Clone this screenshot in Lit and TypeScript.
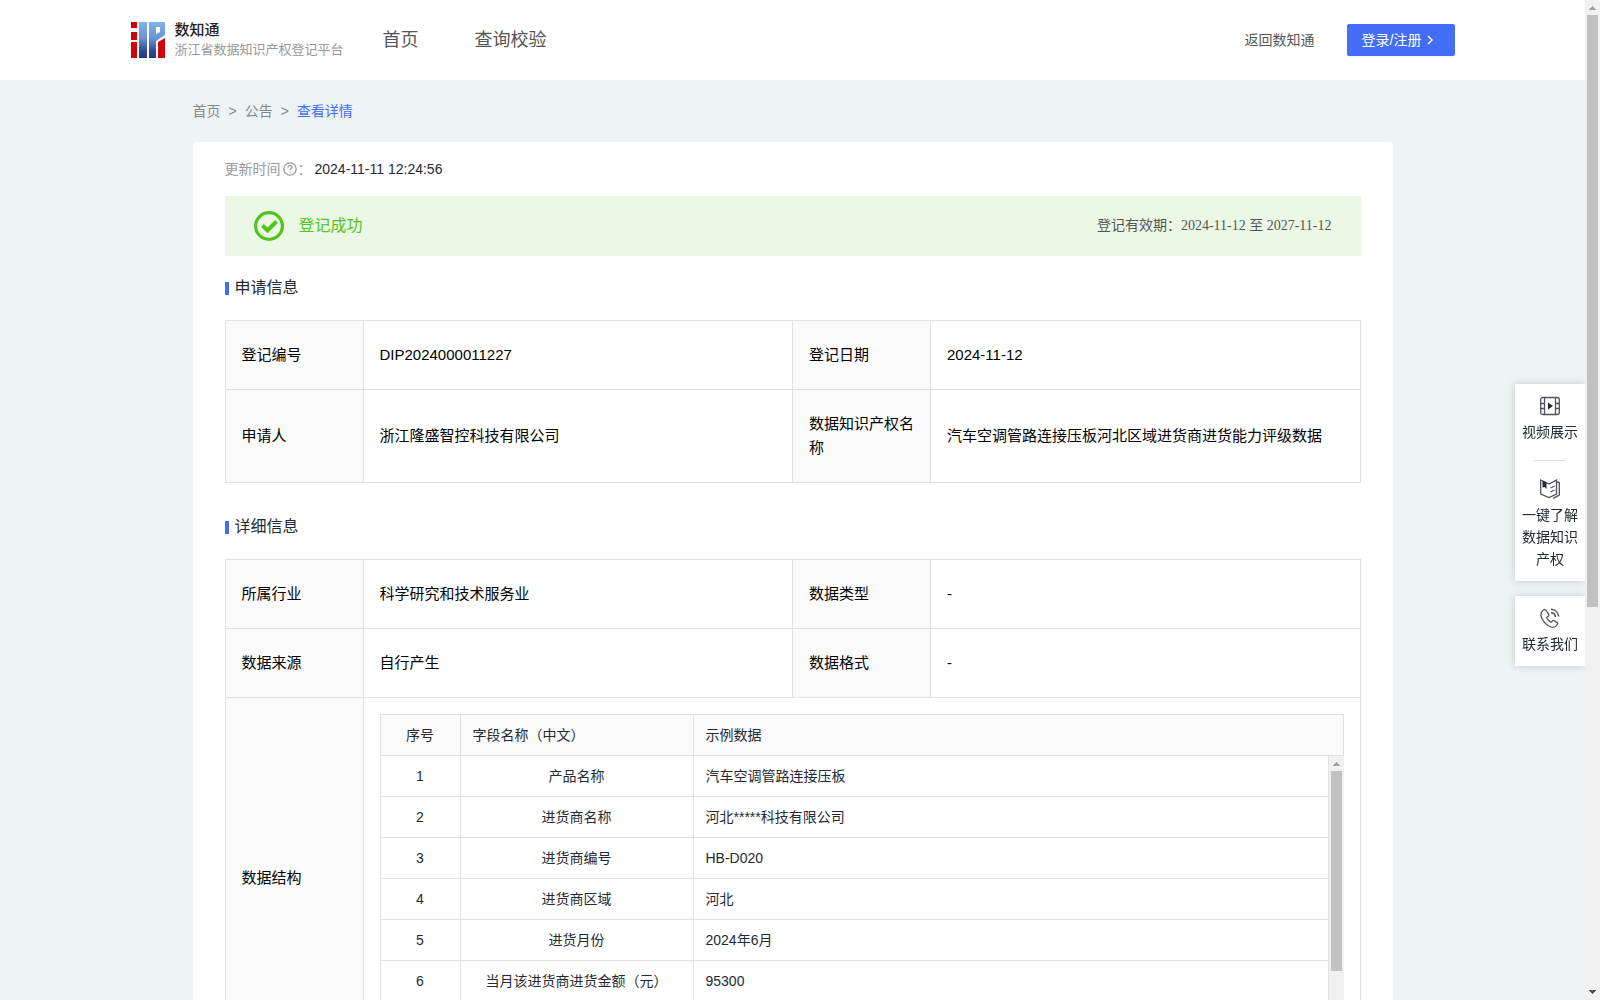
import { LitElement, html, css, svg } from "lit";
import { customElement, property } from "lit/decorators.js";

interface Pair {
  label: string;
  value: string;
}

const applyRows: Pair[][] = [
  [
    { label: "登记编号", value: "DIP2024000011227" },
    { label: "登记日期", value: "2024-11-12" },
  ],
  [
    { label: "申请人", value: "浙江隆盛智控科技有限公司" },
    { label: "数据知识产权名称", value: "汽车空调管路连接压板河北区域进货商进货能力评级数据" },
  ],
];

const detailRows: Pair[][] = [
  [
    { label: "所属行业", value: "科学研究和技术服务业" },
    { label: "数据类型", value: "-" },
  ],
  [
    { label: "数据来源", value: "自行产生" },
    { label: "数据格式", value: "-" },
  ],
];

const fields: [string, string][] = [
  ["产品名称", "汽车空调管路连接压板"],
  ["进货商名称", "河北*****科技有限公司"],
  ["进货商编号", "HB-D020"],
  ["进货商区域", "河北"],
  ["进货月份", "2024年6月"],
  ["当月该进货商进货金额（元）", "95300"],
];

const base = css`
  * {
    box-sizing: border-box;
  }
  a {
    color: inherit;
    text-decoration: none;
  }
  th {
    font-weight: 400;
    text-align: left;
  }
  .scroll {
    flex: 1;
    min-width: 0;
    overflow-x: hidden;
    overflow-y: auto;
    scrollbar-width: none;
  }
`;

/** Vertical scroll rail: two arrows and a thumb that covers a share of the track. */
@customElement("scroll-rail")
export class ScrollRail extends LitElement {
  @property({ type: Number }) share = 50;

  static styles = css`
    :host {
      display: flex;
      flex-direction: column;
      flex: none;
      width: 15px;
      background: #f1f1f1;
    }
    svg {
      display: block;
      flex: none;
    }
    .track {
      flex: 1;
      padding: 0 2px;
    }
    .thumb {
      background: #c1c1c1;
    }
  `;

  render() {
    return html`
      <svg width="15" height="15" viewBox="0 0 15 15" shape-rendering="crispEdges" aria-hidden="true"><path d="M4 10h7L8 6H7z" fill="#a3a3a3"/></svg>
      <div class="track"><div class="thumb" style="height:${this.share}%"></div></div>
      <svg width="15" height="15" viewBox="0 0 15 15" shape-rendering="crispEdges" aria-hidden="true"><path d="M4 5h7L8 9H7z" fill="#505050"/></svg>
    `;
  }
}

const logo = svg`
  <defs>
    <linearGradient id="logo-blue" x1="0" y1="0" x2="0" y2="36" gradientUnits="userSpaceOnUse">
      <stop offset="0" stop-color="#7fb4ea"/>
      <stop offset="0.45" stop-color="#6a93d2"/>
      <stop offset="0.8" stop-color="#2f4a98"/>
      <stop offset="1" stop-color="#26367f"/>
    </linearGradient>
  </defs>
  <path fill="#d2040b" d="M0 0h6v6H0zM0 10h6v8H0zM0 20h6v16H0zM27 20l7-4v20h-7z"/>
  <path fill="url(#logo-blue)" d="M8 0h8v36H8zM18 0h16v13l-9 6v17h-7z"/>
  <path fill="#fff" d="M25 5h4v5l-4 2z"/>`;

@customElement("site-header")
export class SiteHeader extends LitElement {
  static styles = [
    base,
    css`
      :host {
        display: block;
        background: #fff;
      }
      .bar {
        max-width: 1324px;
        height: 80px;
        margin: 0 auto;
        display: flex;
        align-items: center;
      }
      .brand {
        display: flex;
        align-items: center;
        gap: 10px;
        width: 252px;
      }
      .mark {
        width: 34px;
        height: 36px;
        flex: none;
      }
      .words {
        display: flex;
        flex-direction: column;
      }
      .name {
        font-size: 15px;
        line-height: 20px;
        font-weight: 500;
        color: #222;
      }
      .sub {
        font-size: 13px;
        line-height: 20px;
        color: #999;
        white-space: nowrap;
      }
      .nav {
        display: flex;
        gap: 56px;
        flex: 1;
        font-size: 18px;
        line-height: 28px;
        color: #555;
      }
      .back {
        font-size: 14px;
        line-height: 22px;
        color: #555;
        margin-right: 32px;
      }
      .login {
        display: flex;
        align-items: center;
        gap: 4px;
        width: 108px;
        height: 32px;
        padding: 0 15px;
        border: 0;
        border-radius: 2px;
        background: #446df6;
        box-shadow: 0 2px 0 rgba(0, 0, 0, 0.04);
        color: #fff;
        font: inherit;
        font-size: 14px;
        white-space: nowrap;
      }
    `,
  ];

  render() {
    return html`
      <header class="bar">
        <a class="brand" href="#">
          <svg class="mark" viewBox="0 0 34 36" aria-hidden="true">${logo}</svg>
          <span class="words"><span class="name">数知通</span><span class="sub">浙江省数据知识产权登记平台</span></span>
        </a>
        <nav class="nav"><a href="#">首页</a><a href="#">查询校验</a></nav>
        <a class="back" href="#">返回数知通</a>
        <button class="login" type="button">
          登录/注册
          <svg width="10" height="12" viewBox="0 0 10 12" fill="none" stroke="#fff" stroke-width="1.5" aria-hidden="true"><path d="M3 2l4 4-4 4"/></svg>
        </button>
      </header>
    `;
  }
}

@customElement("field-table")
export class FieldTable extends LitElement {
  static styles = [
    base,
    css`
      :host {
        display: block;
        font-size: 14px;
        line-height: 22px;
        color: #252933;
      }
      table {
        border-collapse: separate;
        border-spacing: 0;
        table-layout: fixed;
        width: 100%;
      }
      .head {
        border: 1px solid #e1e1e1;
        background: #fafafa;
      }
      .body {
        display: flex;
        height: 286px;
        border-left: 1px solid #e1e1e1;
      }
      th,
      td {
        height: 41px;
        padding: 0 12px;
        border-right: 1px solid #e1e1e1;
      }
      th {
        height: 40px;
      }
      th:last-child {
        border-right: 0;
      }
      td {
        border-bottom: 1px solid #e1e1e1;
      }
      .no {
        width: 80px;
        text-align: center;
      }
      .field {
        width: 233px;
      }
      td.field {
        text-align: center;
      }
    `,
  ];

  render() {
    return html`
      <div class="head">
        <table>
          <thead><tr><th class="no">序号</th><th class="field">字段名称（中文）</th><th>示例数据</th></tr></thead>
        </table>
      </div>
      <div class="body">
        <div class="scroll">
          <table>
            <tbody>
              ${fields.map(([name, sample], i) => html`<tr><td class="no">${i + 1}</td><td class="field">${name}</td><td>${sample}</td></tr>`)}
            </tbody>
          </table>
        </div>
        <scroll-rail .share=${78}></scroll-rail>
      </div>
    `;
  }
}

@customElement("side-tools")
export class SideTools extends LitElement {
  static styles = [
    base,
    css`
      :host {
        position: fixed;
        right: 15px;
        top: 384px;
        width: 70px;
        display: flex;
        flex-direction: column;
        gap: 15px;
        font-size: 14px;
        line-height: 22px;
        color: #252933;
        text-align: center;
      }
      .panel {
        background: #fff;
        padding: 12px 6px 11px;
        box-shadow: 0 0 8px rgba(0, 0, 0, 0.18);
        clip-path: inset(-10px 0 -10px -10px);
      }
      .tool {
        display: flex;
        flex-direction: column;
        align-items: center;
        gap: 5px;
      }
      .rule {
        width: 32px;
        height: 1px;
        margin: 17px auto 18px;
        border: 0;
        background: #ddd;
      }
    `,
  ];

  render() {
    return html`
      <div class="panel">
        <a class="tool" href="#">
          <svg width="20" height="20" viewBox="0 0 20 20" fill="none" stroke="#50535c" stroke-width="1.3" aria-hidden="true">
            <rect x="0.7" y="1.5" width="18.600" height="17" rx="2"/>
            <path d="M4.500 1.500v17M15.500 1.500v17M.5 7.500h4M.5 12.500h4M15.500 7.500h4M15.500 12.500h4"/>
            <path fill="#252933" stroke="none" d="M8 6.500l5 3.500-5 3.500z"/>
          </svg>
          视频展示
        </a>
        <hr class="rule" />
        <a class="tool" href="#">
          <svg width="20" height="20" viewBox="0 0 20 20" fill="none" stroke="#50535c" stroke-width="1.3" aria-hidden="true">
            <path d="M.7 1l8.300 4 7.500-4v14L9 18.500.7 15z"/>
            <path d="M17 3l2.300.5V16L13 19.300"/>
            <path d="M10.500 9l4-2M10.500 13l4-2"/>
            <path fill="#252933" stroke="none" d="M2.500 1.500l4 2V10L4.500 8l-2 .5z"/>
          </svg>
          一键了解数据知识产权
        </a>
      </div>
      <div class="panel">
        <a class="tool" href="#">
          <svg width="20" height="20" viewBox="0 0 20 20" fill="none" stroke="#50535c" stroke-width="1.3" aria-hidden="true">
            <path d="M3.200 2.300C1 4 0 6.500 2 10.500c2 4 5 7 9 8.500 3 1 5-.5 6.300-2.500.5-.8.2-1.600-.5-2.100l-2.600-1.700c-.8-.5-1.500-.3-2.100.4l-.8 1c-.6.5-4.800-3.200-4.600-4.800l1.300-.8c.8-.5 1-1.300.6-2.100L6.500 3c-.5-1.200-1.900-1.800-3.300-.7z"/>
            <path stroke-width="1.600" d="M11 4.500c2.500.3 4.300 2.200 4.500 4.500M11 1.300c4 .2 7.200 3.200 7.700 7.200"/>
          </svg>
          联系我们
        </a>
      </div>
    `;
  }
}

@customElement("app-root")
export class AppRoot extends LitElement {
  static styles = [
    base,
    css`
      :host {
        display: flex;
        height: 100vh;
        background: #eef3f6;
        font-family: "Liberation Sans", "Noto Sans CJK SC", sans-serif;
        font-size: 14px;
        line-height: 22px;
        color: #252933;
      }
      .wrap {
        max-width: 1200px;
        margin: 0 auto;
        padding-bottom: 100px;
      }
      .crumbs {
        display: flex;
        gap: 8px;
        padding: 20px 0;
        color: #888;
      }
      .crumbs .here {
        color: #446df6;
      }
      .card {
        padding: 16px 32px;
        background: #fff;
        border-radius: 4px;
      }
      .updated {
        display: flex;
        align-items: center;
        color: #999;
      }
      .updated time {
        color: #252933;
        margin-left: 3px;
      }
      .help {
        margin: 0 1px 0 2px;
      }
      .banner {
        display: flex;
        align-items: center;
        height: 60px;
        margin-top: 16px;
        padding: 0 29px;
        background: #ebf8e6;
        color: #52c41a;
      }
      .ok {
        margin-right: 15px;
      }
      .done {
        flex: 1;
        font-size: 16px;
      }
      .valid {
        font-family: "Liberation Serif", "Noto Sans CJK SC", serif;
        color: #555;
      }
      .title {
        display: flex;
        align-items: center;
        gap: 6px;
        margin: 20px 0;
        font-size: 16px;
        line-height: 24px;
        font-weight: 400;
      }
      .title::before {
        content: "";
        width: 4px;
        height: 13px;
        background: #446df6;
      }
      .info {
        border-collapse: collapse;
        table-layout: fixed;
        width: 100%;
        font-size: 15px;
        line-height: 24px;
        color: #000;
      }
      .info + .title {
        margin-top: 32px;
      }
      .info th,
      .info td {
        border: 1px solid #e1e1e1;
        padding: 22px 16px;
      }
      .info th {
        width: 138px;
        background: #fafafa;
      }
      .info .nest {
        padding: 16px;
      }
    `,
  ];

  private renderRow(pairs: Pair[]) {
    return html`<tr>${pairs.map((p) => html`<th scope="row">${p.label}</th><td>${p.value}</td>`)}</tr>`;
  }

  render() {
    return html`
      <div class="scroll">
        <site-header></site-header>
        <main class="wrap">
          <nav class="crumbs">
            <a href="#">首页</a><span>&gt;</span><a href="#">公告</a><span>&gt;</span><a class="here" href="#">查看详情</a>
          </nav>
          <section class="card">
            <div class="updated">
              <span>更新时间</span>
              <svg class="help" width="14" height="14" viewBox="0 0 14 14" fill="none" stroke="#999" stroke-width="1.3" aria-hidden="true">
                <circle cx="7" cy="7" r="6.200"/>
                <path d="M5 5.600c0-1.200.9-2 2-2s2 .8 2 1.800c0 1.300-2 1.400-2 2.800M7 9.400v1.200"/>
              </svg>
              <span>：</span>
              <time>2024-11-11 12:24:56</time>
            </div>
            <div class="banner">
              <svg class="ok" width="30" height="30" viewBox="0 0 30 30" fill="none" stroke="#52c41a" aria-hidden="true">
                <circle cx="15" cy="15" r="13.400" stroke-width="3.200"/>
                <path d="M8.500 14.500l5 5 9-9" stroke-width="4"/>
              </svg>
              <span class="done">登记成功</span>
              <span class="valid">登记有效期：2024-11-12 至 2027-11-12</span>
            </div>
            <h2 class="title">申请信息</h2>
            <table class="info"><tbody>${applyRows.map((r) => this.renderRow(r))}</tbody></table>
            <h2 class="title">详细信息</h2>
            <table class="info">
              <tbody>
                ${detailRows.map((r) => this.renderRow(r))}
                <tr><th scope="row">数据结构</th><td class="nest" colspan="3"><field-table></field-table></td></tr>
              </tbody>
            </table>
          </section>
        </main>
        <side-tools></side-tools>
      </div>
      <scroll-rail .share=${61}></scroll-rail>
    `;
  }
}
